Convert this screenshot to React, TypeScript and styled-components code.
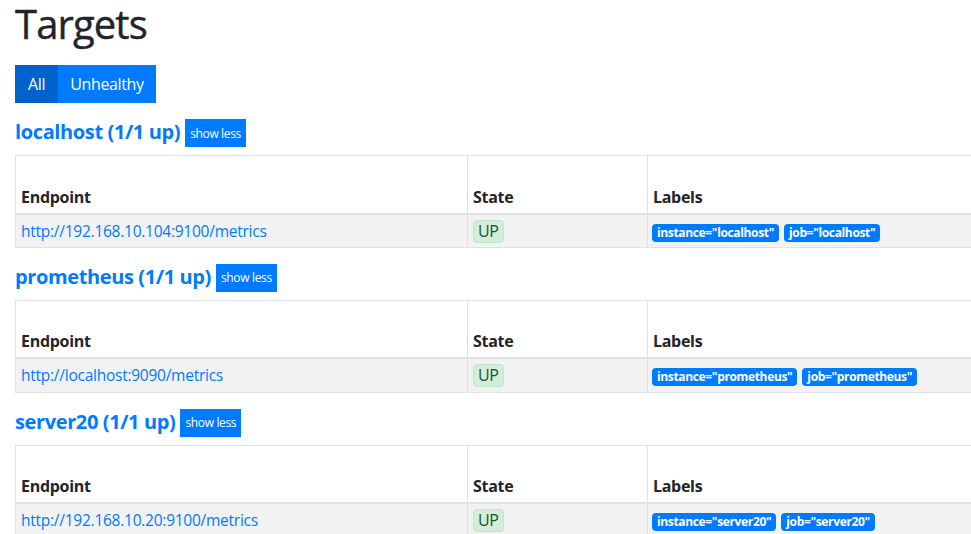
import React from 'react';
import styled, { createGlobalStyle } from 'styled-components';

const Global = createGlobalStyle`
  html, body { margin: 0; padding: 0; background: #fff; overflow: hidden; }
  body {
    font-family: "Open Sans", "Noto Sans", "Liberation Sans", sans-serif;
    font-size: 16px;
    line-height: 1.5;
    color: #212529;
  }
  * { box-sizing: border-box; }
`;

const Page = styled.div`
  padding: 0 0 0 15px;
  width: 1400px;
`;

const Title = styled.h1`
  margin: 0;
  font-size: 40px;
  font-weight: 500;
  line-height: 48px;
  letter-spacing: -0.9px;
  color: #212529;
  -webkit-text-stroke: 0.4px #212529;
`;

const ToggleGroup = styled.div`
  display: inline-flex;
  margin-top: 17px;
`;

const ToggleButton = styled.button<{ $active?: boolean }>`
  font-family: inherit;
  font-size: 16px;
  line-height: 24px;
  height: 38px;
  padding: 0 ${(p) => (p.$active ? 13 : 12)}px;
  border: 0;
  color: #fff;
  background: ${(p) => (p.$active ? '#0062cc' : '#007bff')};
  border-radius: 0;
  letter-spacing: -0.35px;
`;

const Section = styled.section`
  display: flex;
  flex-direction: column;
`;

const JobHeading = styled.h2`
  display: flex;
  align-items: center;
  gap: 5px;
  margin: 16px 0 8px;
  font-size: 20px;
  font-weight: 700;
  line-height: 28px;
  letter-spacing: -0.38px;
`;

const JobLink = styled.a`
  color: #007bff;
  text-decoration: none;
  position: relative;
  top: -1px;
`;

const SmallButton = styled.button`
  font-family: inherit;
  background: #007bff;
  color: #fff;
  border: 0;
  border-radius: 0;
  font-size: 12px;
  font-weight: 400;
  height: 28px;
  padding: 0 5px;
  letter-spacing: -0.35px;
`;

const Table = styled.table`
  border-collapse: collapse;
  table-layout: fixed;
  width: 1332px;
`;

const Th = styled.th<{ $w: number }>`
  width: ${(p) => p.$w}px;
  height: 58px;
  padding: 4px 5px;
  text-align: left;
  vertical-align: bottom;
  font-weight: 700;
  letter-spacing: -0.3px;
  border: 1px solid #dee2e6;
  border-bottom: 2px solid #dee2e6;
`;

const Td = styled.td`
  height: 33px;
  padding: 4px 5px;
  vertical-align: middle;
  background: #f2f2f2;
  border: 1px solid #dee2e6;
  white-space: nowrap;
`;

const EndpointLink = styled.a`
  color: #007bff;
  text-decoration: none;
  font-size: 15.5px;
  letter-spacing: -0.25px;
`;

const StateBadge = styled.span`
  display: inline-block;
  background: #d4edda;
  border: 1px solid #c3e6cb;
  color: #155724;
  border-radius: 4px;
  padding: 0 4px;
  line-height: 21px;
  font-size: 16px;
  letter-spacing: -0.3px;
`;

const LabelBadge = styled.span`
  display: inline-block;
  background: #007bff;
  color: #fff;
  font-size: 12px;
  font-weight: 700;
  line-height: 12px;
  padding: 3px 5px;
  border-radius: 4px;
  margin-right: 5px;
  letter-spacing: -0.35px;
`;

const LabelCell = styled(Td)`
  padding-left: 4px;
`;

type Target = {
  job: string;
  endpoint: string;
  labels: [string, string][];
};

const targets: Target[] = [
  {
    job: 'localhost',
    endpoint: 'http://192.168.10.104:9100/metrics',
    labels: [
      ['instance', 'localhost'],
      ['job', 'localhost'],
    ],
  },
  {
    job: 'prometheus',
    endpoint: 'http://localhost:9090/metrics',
    labels: [
      ['instance', 'prometheus'],
      ['job', 'prometheus'],
    ],
  },
  {
    job: 'server20',
    endpoint: 'http://192.168.10.20:9100/metrics',
    labels: [
      ['instance', 'server20'],
      ['job', 'server20'],
    ],
  },
];

export default function App() {
  return (
    <>
      <Global />
      <Page>
        <Title>Targets</Title>
        <ToggleGroup>
          <ToggleButton $active>All</ToggleButton>
          <ToggleButton>Unhealthy</ToggleButton>
        </ToggleGroup>
        {targets.map((t) => (
          <Section key={t.job}>
            <JobHeading>
              <JobLink href={`#job-${t.job}`}>{t.job} (1/1 up)</JobLink>
              <SmallButton>show less</SmallButton>
            </JobHeading>
            <Table>
              <thead>
                <tr>
                  <Th $w={452}>Endpoint</Th>
                  <Th $w={180}>State</Th>
                  <Th $w={700}>Labels</Th>
                </tr>
              </thead>
              <tbody>
                <tr>
                  <Td>
                    <EndpointLink href={t.endpoint}>{t.endpoint}</EndpointLink>
                  </Td>
                  <Td>
                    <StateBadge>UP</StateBadge>
                  </Td>
                  <LabelCell>
                    {t.labels.map(([k, v]) => (
                      <LabelBadge key={k}>{`${k}="${v}"`}</LabelBadge>
                    ))}
                  </LabelCell>
                </tr>
              </tbody>
            </Table>
          </Section>
        ))}
      </Page>
    </>
  );
}
